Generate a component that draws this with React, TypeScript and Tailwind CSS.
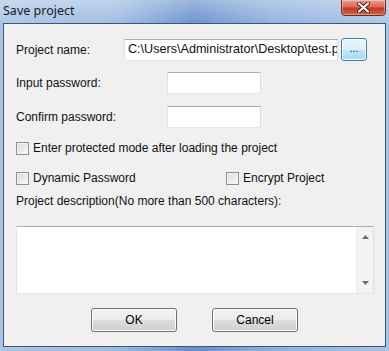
import React from "react";

function CheckBox({ label }: { label: string }) {
  return (
    <label className="flex items-center gap-[4px] h-[14px]">
      <span className="w-[13px] h-[13px] border border-[#8e8f8f] bg-[linear-gradient(135deg,#dcdcdc,#f7f7f7)] shadow-[inset_0_0_0_1px_#f4f4f4]" />
      <span>{label}</span>
    </label>
  );
}

function WinButton({ children }: { children: React.ReactNode }) {
  return (
    <button className="w-[86px] h-[24px] rounded-[3px] border border-[#707070] bg-[linear-gradient(180deg,#f2f2f2_0%,#ebebeb_50%,#dddddd_51%,#cfcfcf_100%)] shadow-[inset_0_0_0_1px_#fcfcfc] text-[12px] text-black">
      {children}
    </button>
  );
}

export default function App() {
  return (
    <div className="w-[389px] h-[351px] overflow-hidden flex flex-col bg-[linear-gradient(90deg,#a9c4e6_0%,#9dbbe2_30%,#6590cc_50%,#8fb0dd_70%,#a8c4e7_100%)] font-['Liberation_Sans',Arial,sans-serif] text-[12px] text-[#111]">
      {/* title bar */}
      <div className="relative h-[23px] flex items-center pl-[3px] bg-[linear-gradient(180deg,rgba(255,255,255,0.35),rgba(255,255,255,0.05))]">
        <span className="font-['Noto_Sans',sans-serif] text-[12.5px] text-[#1a1a1a] pb-[1px]">Save project</span>
        <div className="absolute left-[341px] top-[-1px] w-[45px] h-[17px] rounded-b-[4px] border border-[#6a2a20] bg-[linear-gradient(180deg,#eba08f_0%,#dc6a54_45%,#c4381f_55%,#d0634a_100%)] shadow-[inset_0_0_0_1px_rgba(255,255,255,0.35)] flex items-center justify-center">
          <svg width="13" height="11" viewBox="0 0 13 11">
            <path d="M2 1.5 L11 9.5 M11 1.5 L2 9.5" stroke="#4a1a12" strokeWidth="4" strokeLinecap="round" />
            <path d="M2 1.5 L11 9.5 M11 1.5 L2 9.5" stroke="#ffffff" strokeWidth="2.2" strokeLinecap="round" />
          </svg>
        </div>
      </div>

      {/* client area */}
      <div className="mx-[3px] h-[324px] border border-[#3f5675] bg-[#f0f0f0] flex flex-col pl-[12px]">
        <div className="flex items-center mt-[14px] h-[23px]">
          <span className="w-[108px]">Project name:</span>
          <div className="w-[214px] h-[22px] border border-[#abadb3] border-l-[#e2e3ea] border-r-[#dbdfe6] border-b-[#e3e9ef] bg-white flex items-center pl-[3px] overflow-hidden whitespace-nowrap text-[12.6px]">
            <span className="block">C:\Users\Administrator\Desktop\test.project</span>
          </div>
          <button className="ml-[3px] w-[26px] h-[23px] rounded-[3px] border border-[#3c7fb1] bg-[linear-gradient(180deg,#eaf6fd_0%,#d9f0fc_50%,#bee6fd_51%,#a7d9f5_100%)] shadow-[inset_0_0_0_1px_#f6fbfe] text-[10px] leading-none pb-[2px]">
            ...
          </button>
        </div>

        <div className="flex items-center mt-[11px] h-[22px]">
          <span className="w-[151px]">Input password:</span>
          <div className="w-[94px] h-[22px] border border-[#abadb3] border-l-[#e2e3ea] border-r-[#dbdfe6] border-b-[#e3e9ef] bg-white" />
        </div>

        <div className="flex items-center mt-[12px] h-[22px]">
          <span className="w-[151px]">Confirm password:</span>
          <div className="w-[94px] h-[22px] border border-[#abadb3] border-l-[#e2e3ea] border-r-[#dbdfe6] border-b-[#e3e9ef] bg-white" />
        </div>

        <div className="mt-[13px]">
          <CheckBox label="Enter protected mode after loading the project" />
        </div>

        <div className="flex mt-[16px]">
          <div className="w-[210px]">
            <CheckBox label="Dynamic Password" />
          </div>
          <CheckBox label="Encrypt Project" />
        </div>

        <div className="mt-[9px] h-[14px] leading-[14px]">Project description(No more than 500 characters):</div>

        <div className="mt-[18px] w-[358px] h-[68px] border border-[#abadb3] border-l-[#e2e3ea] border-r-[#dbdfe6] border-b-[#e3e9ef] bg-white flex justify-end">
          <div className="w-[17px] h-full bg-[#f3f3f3] border-l border-[#ececec] flex flex-col items-center justify-between py-[8px]">
            <svg width="7" height="4" viewBox="0 0 7 4">
              <path d="M0 4 L3.5 0 L7 4 Z" fill="#6d6d6d" />
            </svg>
            <svg width="7" height="4" viewBox="0 0 7 4">
              <path d="M0 0 L7 0 L3.5 4 Z" fill="#6d6d6d" />
            </svg>
          </div>
        </div>

        <div className="flex mt-[14px] pl-[75px] gap-[35px]">
          <WinButton>OK</WinButton>
          <WinButton>Cancel</WinButton>
        </div>
      </div>
    </div>
  );
}
